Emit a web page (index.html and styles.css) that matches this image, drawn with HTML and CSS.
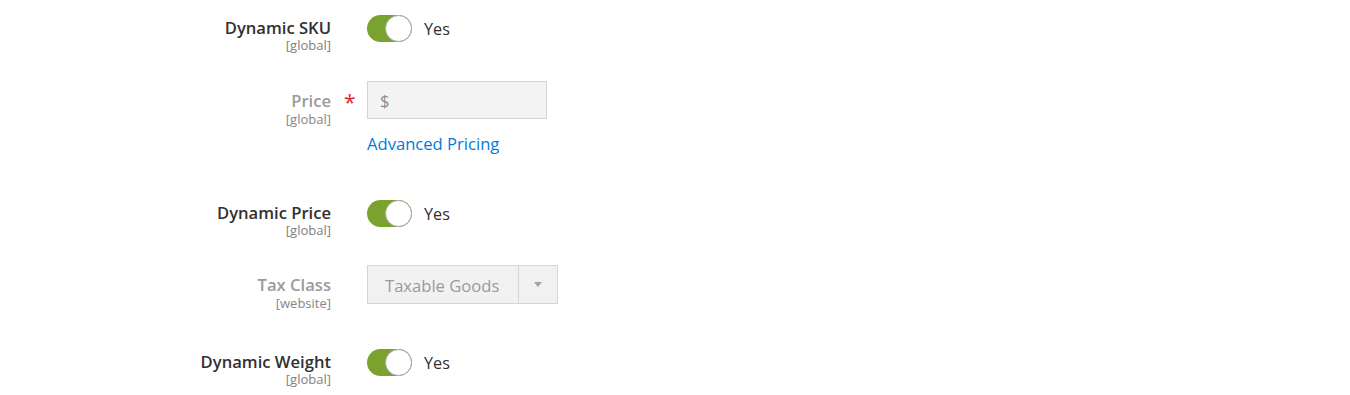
FILE: index.html
```html
<!DOCTYPE html>
<html>
<head>
<meta charset="utf-8">
<link rel="stylesheet" href="styles.css">
</head>
<body>
<div class="form">
  <div class="field row-sku">
    <div class="label"><span class="title">Dynamic SKU</span><span class="scope">[global]</span></div>
    <div class="req"></div>
    <div class="control">
      <div class="switch-wrap"><span class="switch"><span class="knob"></span></span><span class="yes">Yes</span></div>
    </div>
  </div>
  <div class="field row-price disabled">
    <div class="label"><span class="title">Price</span><span class="scope">[global]</span></div>
    <div class="req"><span class="star">*</span></div>
    <div class="control">
      <div class="input"><span class="cur">$</span></div>
      <a class="link" href="#">Advanced Pricing</a>
    </div>
  </div>
  <div class="field row-dprice">
    <div class="label"><span class="title">Dynamic Price</span><span class="scope">[global]</span></div>
    <div class="req"></div>
    <div class="control">
      <div class="switch-wrap"><span class="switch"><span class="knob"></span></span><span class="yes">Yes</span></div>
    </div>
  </div>
  <div class="field row-tax disabled">
    <div class="label"><span class="title">Tax Class</span><span class="scope">[website]</span></div>
    <div class="req"></div>
    <div class="control">
      <div class="select"><span class="sel-text">Taxable Goods</span><span class="sel-btn"><span class="arrow"></span></span></div>
    </div>
  </div>
  <div class="field row-weight">
    <div class="label"><span class="title">Dynamic Weight</span><span class="scope">[global]</span></div>
    <div class="req"></div>
    <div class="control">
      <div class="switch-wrap"><span class="switch"><span class="knob"></span></span><span class="yes">Yes</span></div>
    </div>
  </div>
</div>
</body>
</html>
```

FILE: styles.css
```css
html, body {
  margin: 0;
  padding: 0;
  background: #ffffff;
}
body {
  font-family: "Open Sans", "Noto Sans", sans-serif;
  color: #303030;
  width: 1350px;
  height: 395px;
  overflow: hidden;
}
.form {
  display: flex;
  flex-direction: column;
  padding-top: 14px;
}
.field {
  display: grid;
  grid-template-columns: 331px 36px auto;
  align-items: start;
}
.row-sku { height: 67px; }
.row-price { height: 118px; }
.row-dprice { height: 66px; }
.row-tax { height: 83px; }
.row-weight { height: 47px; }

.label {
  display: flex;
  flex-direction: column;
  align-items: flex-end;
  text-align: right;
}
.title {
  font-size: 16.6px;
  font-weight: 600;
  line-height: 22px;
  margin-top: 2.5px;
  color: #303030;
}
.scope {
  font-size: 13px;
  line-height: 13px;
  color: #808080;
}
.disabled .title { color: #9a9a9a; }
.disabled .scope { color: #868686; }
.row-price .title, .row-tax .title { line-height: 24px; margin-top: 8px; }

.req {
  position: relative;
  height: 38px;
}
.star {
  position: absolute;
  left: 13px;
  top: 11px;
  color: #e22626;
  font-size: 21px;
  line-height: 20px;
}

.control {
  display: flex;
  flex-direction: column;
  align-items: flex-start;
}
.switch-wrap {
  display: flex;
  align-items: center;
  gap: 12px;
}
.switch {
  display: flex;
  justify-content: flex-end;
  width: 45px;
  height: 27px;
  border-radius: 14px;
  background: #79a22e;
  box-sizing: border-box;
}
.knob {
  width: 27px;
  height: 27px;
  border-radius: 50%;
  background: #ffffff;
  border: 1px solid #aaaaaa;
  box-sizing: border-box;
}
.yes {
  font-size: 16.2px;
  color: #303030;
  line-height: 27px;
  padding-top: 2px;
}

.input {
  width: 180px;
  height: 38px;
  box-sizing: border-box;
  background: #f3f3f3;
  border: 1px solid #d4d4d4;
  display: flex;
  align-items: center;
  padding-left: 12px;
}
.cur {
  font-size: 16.6px;
  color: #8a8a8a;
}
.link {
  margin-top: 14px;
  font-size: 16.6px;
  line-height: 22px;
  color: #007bdb;
  text-decoration: none;
}

.select {
  width: 191px;
  height: 39px;
  box-sizing: border-box;
  background: #f1f1f1;
  border: 1px solid #d6d6d6;
  display: flex;
  align-items: stretch;
}
.sel-text {
  flex: 1;
  display: flex;
  align-items: center;
  padding-left: 17px;
  padding-top: 1px;
  font-size: 16.6px;
  color: #9a9a9a;
}
.sel-btn {
  width: 38px;
  border-left: 1px solid #d6d6d6;
  display: flex;
  align-items: center;
  justify-content: center;
}
.arrow {
  width: 0;
  height: 0;
  border-left: 4.5px solid transparent;
  border-right: 4.5px solid transparent;
  border-top: 5px solid #a3a3a3;
}
```
